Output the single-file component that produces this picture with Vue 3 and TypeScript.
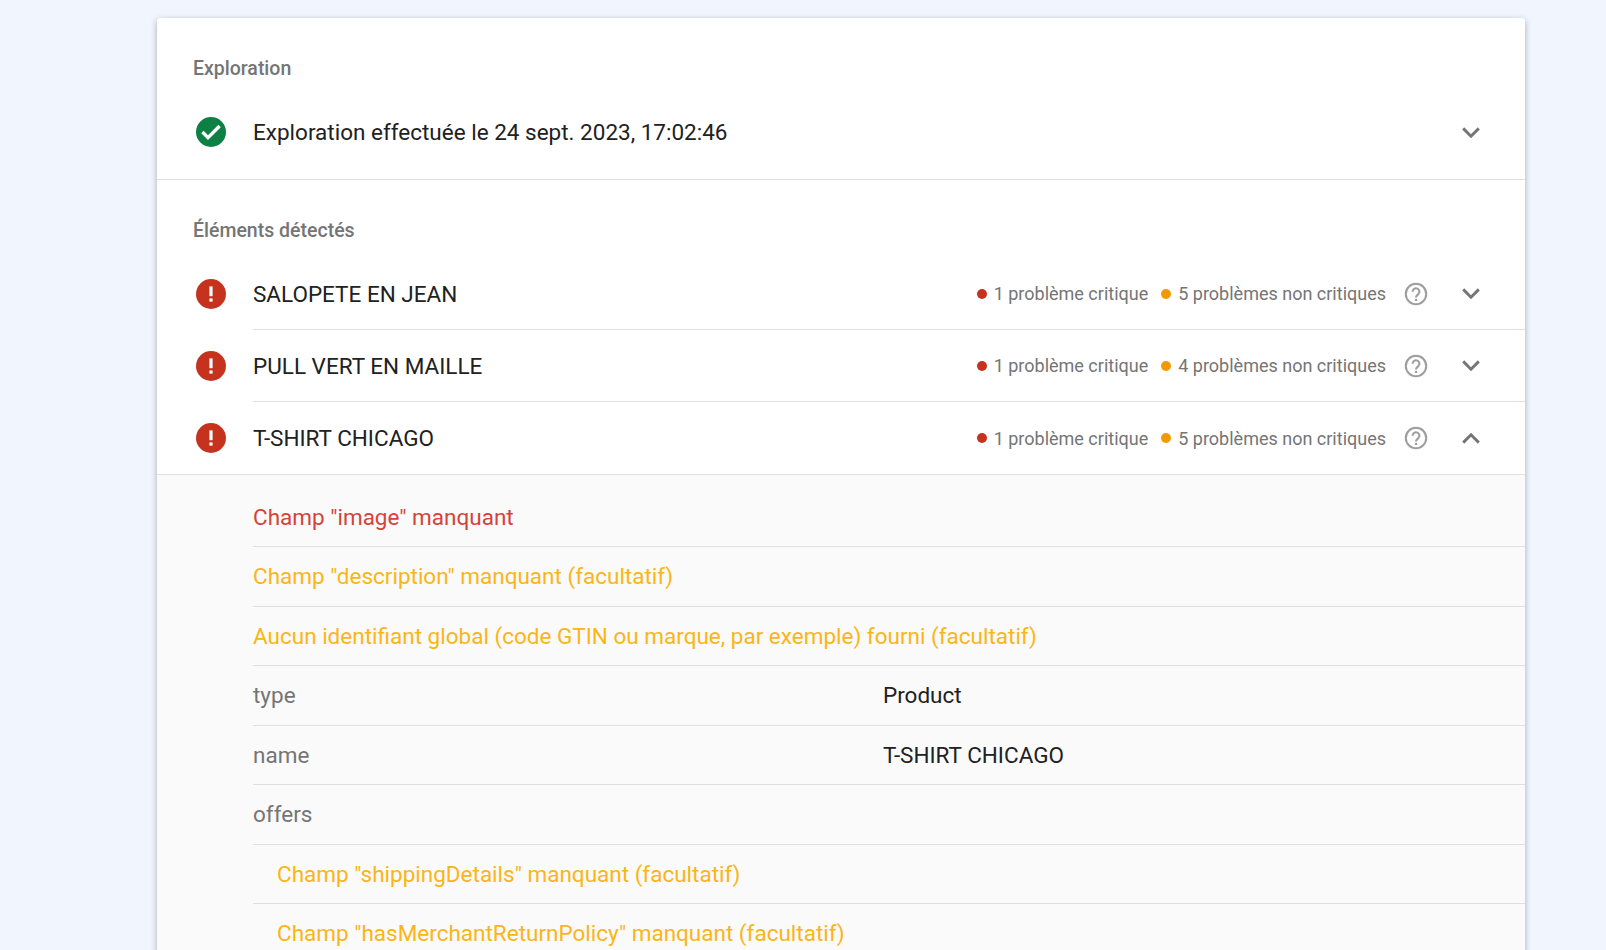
<script setup lang="ts">
interface Item { name: string; nonCritical: number; open: boolean }
const items: Item[] = [
  { name: 'SALOPETE EN JEAN', nonCritical: 5, open: false },
  { name: 'PULL VERT EN MAILLE', nonCritical: 4, open: false },
  { name: 'T-SHIRT CHICAGO', nonCritical: 5, open: true },
]
</script>

<template>
  <main class="page">
    <section class="card">
      <div class="section first">
        <h2 class="heading">Exploration</h2>
        <div class="row plain">
          <svg class="status" viewBox="0 0 30 30">
            <circle cx="15" cy="15" r="15" fill="#0d8043" />
            <path d="M6.4 15l5.6 5.6L23.6 9" fill="none" stroke="#fff" stroke-width="3.4" />
          </svg>
          <div class="row-body no-line">
            <span class="title">Exploration effectuée le 24 sept. 2023, 17:02:46</span>
            <svg class="chev" viewBox="0 0 18 11"><path d="M1.2 1.4L9 9.2l7.8-7.8" fill="none" stroke="#757575" stroke-width="2.9" /></svg>
          </div>
        </div>
      </div>
      <div class="section second">
        <h2 class="heading">Éléments détectés</h2>
        <div v-for="(item, i) in items" :key="item.name" class="row" :class="{ last: i === items.length - 1 }">
          <svg class="status" viewBox="0 0 30 30">
            <circle cx="15" cy="15" r="15" fill="#c5331f" />
            <rect x="13.4" y="7.4" width="3.2" height="9.8" fill="#fff" />
            <rect x="13.4" y="19.4" width="3.2" height="3.2" fill="#fff" />
          </svg>
          <div class="row-body">
            <span class="title">{{ item.name }}</span>
            <div class="meta">
              <span class="dot red"></span><span class="count">1 problème critique</span>
              <span class="dot orange"></span><span class="count">{{ item.nonCritical }} problèmes non critiques</span>
              <svg class="help" viewBox="0 0 24 24">
                <circle cx="12" cy="12" r="10.2" fill="none" stroke="#9e9e9e" stroke-width="2.1" />
                <path d="M8.6 9.8a3.4 3.4 0 1 1 5.5 2.6c-1.2.9-2.1 1.6-2.1 3" fill="none" stroke="#9e9e9e" stroke-width="2.1" />
                <rect x="10.9" y="16.8" width="2.2" height="2.2" fill="#9e9e9e" />
              </svg>
              <svg class="chev" viewBox="0 0 18 11">
                <path :d="item.open ? 'M1.2 9.6L9 1.8l7.8 7.8' : 'M1.2 1.4L9 9.2l7.8-7.8'" fill="none" stroke="#757575" stroke-width="2.9" />
              </svg>
            </div>
          </div>
        </div>
      </div>
      <div class="details">
        <div class="line crit">Champ "image" manquant</div>
        <div class="line warn">Champ "description" manquant (facultatif)</div>
        <div class="line warn">Aucun identifiant global (code GTIN ou marque, par exemple) fourni (facultatif)</div>
        <div class="line kv"><span class="key">type</span><span class="val">Product</span></div>
        <div class="line kv"><span class="key">name</span><span class="val">T-SHIRT CHICAGO</span></div>
        <div class="line kv"><span class="key">offers</span></div>
        <div class="line warn nested">Champ "shippingDetails" manquant (facultatif)</div>
        <div class="line warn nested">Champ "hasMerchantReturnPolicy" manquant (facultatif)</div>
      </div>
    </section>
  </main>
</template>

<style scoped>
.page {
  height: 950px;
  overflow: hidden;
  background: #f1f5fe;
  padding: 18px 81px 0 157px;
  box-sizing: border-box;
  font-family: Roboto, sans-serif;
}
.card {
  background: #fff;
  border-radius: 3px 3px 0 0;
  box-shadow: 0 2px 6px rgba(60, 64, 67, 0.4);
}
.section.first {
  height: 162px;
  padding-top: 37px;
  box-sizing: border-box;
  border-bottom: 1px solid #e0e0e0;
}
.section.second {
  padding-top: 37px;
}
.heading {
  margin: 0 0 0 36px;
  font-size: 19.5px;
  line-height: 28px;
  font-weight: 500;
  color: #757575;
}
.row {
  display: flex;
  align-items: center;
  height: 72px;
  padding-left: 39px;
}
.row.plain {
  margin-top: 13px;
}
.second .heading {
  margin-bottom: 13px;
}
.status {
  width: 30px;
  height: 30px;
  flex: none;
  margin-right: 27px;
}
.row-body {
  flex: 1;
  height: 100%;
  display: flex;
  align-items: center;
  justify-content: space-between;
  border-bottom: 1px solid #e0e0e0;
  padding-right: 45px;
  box-sizing: border-box;
}
.row-body.no-line,
.last .row-body {
  border-bottom: 0;
}
.last {
  border-bottom: 1px solid #e0e0e0;
}
.title {
  font-size: 22.5px;
  color: #212121;
}
.meta {
  display: flex;
  align-items: center;
}
.dot {
  width: 10px;
  height: 10px;
  border-radius: 50%;
  margin-right: 7px;
}
.red { background: #c5331f; }
.orange { background: #f29900; }
.count {
  font-size: 18px;
  color: #757575;
  margin-right: 13px;
}
.help {
  width: 24px;
  height: 24px;
  margin-left: 4.5px;
  margin-right: 34.5px;
}
.chev {
  width: 18px;
  height: 11px;
  flex: none;
}
.details {
  background: #fafafa;
  padding: 12.5px 0 0 96px;
}
.line {
  display: flex;
  align-items: center;
  font-size: 22.5px;
  border-bottom: 1px solid #e0e0e0;
  box-sizing: border-box;
  height: 59.5px;
}
.crit { color: #d4433a; }
.warn { color: #fbb516; }
.key { color: #757575; width: 630px; }
.val { color: #212121; }
.nested { padding-left: 24px; }
</style>

<style>
html, body { margin: 0; overflow: hidden; }
</style>
